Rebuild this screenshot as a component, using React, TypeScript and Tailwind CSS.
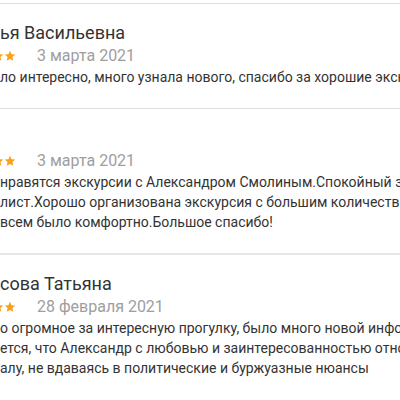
import React from 'react';

type Review = {
  name: string;
  date: string;
  lines: string[];
};

const reviews: Review[] = [
  {
    name: 'ья Васильевна',
    date: '3 марта 2021',
    lines: ['ло интересно, много узнала нового, спасибо за хорошие экскурсии'],
  },
  {
    name: '',
    date: '3 марта 2021',
    lines: [
      'нравятся экскурсии с Александром Смолиным.Спокойный знающий',
      'лист.Хорошо организована экскурсия с большим количеством',
      'всем было комфортно.Большое спасибо!',
    ],
  },
  {
    name: 'сова Татьяна',
    date: '28 февраля 2021',
    lines: [
      'о огромное за интересную прогулку, было много новой информации',
      'ется, что Александр с любовью и заинтересованностью относится',
      'алу, не вдаваясь в политические и буржуазные нюансы',
    ],
  },
];

const Star = () => (
  <svg width="12" height="12" viewBox="0 0 24 24" className="shrink-0">
    <path
      fill="#f7a21b"
      d="M12 1.5l3.1 7 7.4.7-5.6 5 1.7 7.5L12 17.8l-6.6 3.9 1.7-7.5-5.6-5 7.4-.7z"
    />
  </svg>
);

const ReviewCard: React.FC<{ review: Review; thick?: boolean }> = ({ review, thick }) => (
  <div className={thick ? 'border-t-2 border-[#e6e6e6]' : 'border-t border-[#dedede]'}>
    <div className="pt-[17px] pb-[21px]">
      <div className="h-6 text-[18px] leading-6 text-[#333333] whitespace-nowrap">{review.name}</div>
      <div className="flex items-center h-[22px]">
        <div className="flex -ml-[44px]">
          <Star />
          <Star />
          <Star />
          <Star />
          <Star />
        </div>
        <span className="ml-[21px] text-[16px] leading-[22px] text-[#9e9e9e] whitespace-nowrap">
          {review.date}
        </span>
      </div>
      {review.lines.map((line, i) => (
        <div key={i} className="text-[14px] leading-5 text-[#333333] whitespace-nowrap">
          {line}
        </div>
      ))}
    </div>
  </div>
);

export default function App() {
  return (
    <div
      className="w-[400px] h-[400px] overflow-hidden bg-white"
      style={{ fontFamily: 'Roboto, "Noto Sans", sans-serif' }}
    >
      <div className="h-[3px]" />
      {reviews.map((r, i) => (
        <ReviewCard key={i} review={r} thick={i === 2} />
      ))}
    </div>
  );
}
